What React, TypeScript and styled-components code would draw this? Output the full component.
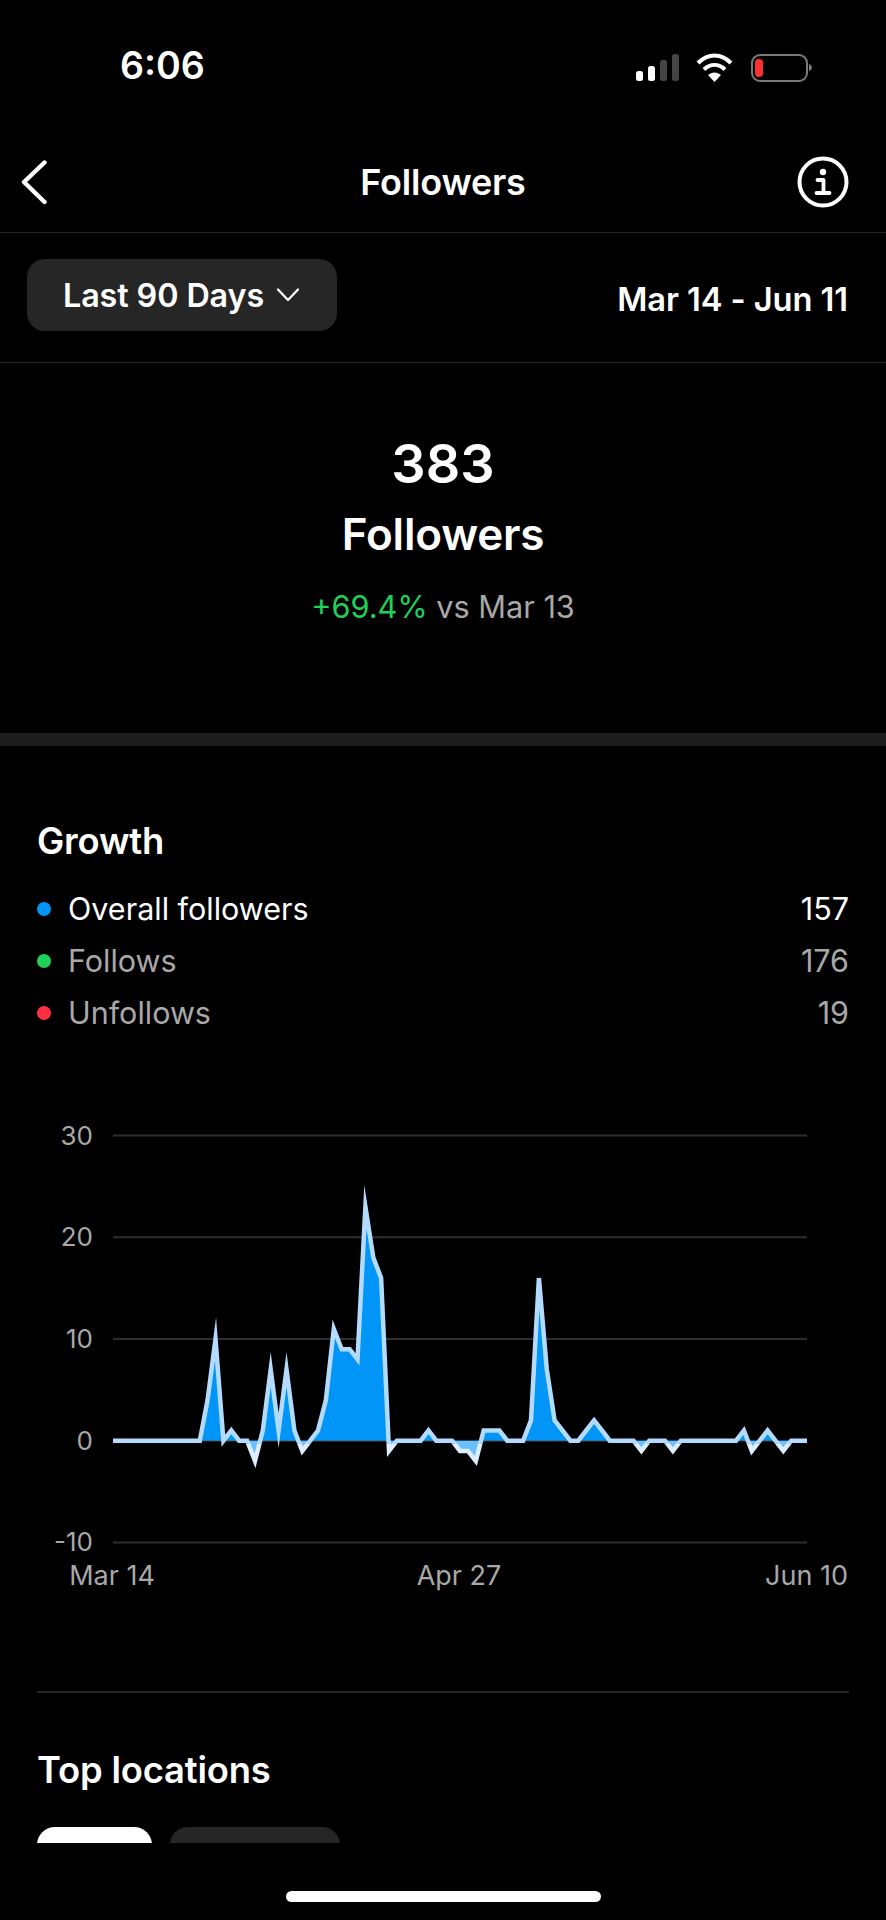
import React from "react";
import styled, { createGlobalStyle } from "styled-components";

const Global = createGlobalStyle`
  html, body { margin: 0; padding: 0; background: #000; }
  body { font-family: Inter, "Liberation Sans", sans-serif; color: #fff; }
`;

const Screen = styled.div`
  width: 886px;
  height: 1920px;
  background: #000;
  display: flex;
  flex-direction: column;
  overflow: hidden;
`;
const Scroller = styled.main`
  height: 1843px;
  overflow: hidden;
  flex: none;
`;
const StatusBar = styled.header`
  height: 132px;
  display: flex;
  justify-content: space-between;
  padding: 42px 72px 0 120px;
  box-sizing: border-box;
`;
const Clock = styled.div`
  font-size: 37.6px;
  line-height: 48px;
  font-weight: 600;
`;
const StatusIcons = styled.svg`
  display: block;
  margin-top: 10px;
`;
const Nav = styled.nav`
  height: 100px;
  display: grid;
  grid-template-columns: 1fr auto 1fr;
  align-items: center;
  padding: 0 36px 0 20px;
  border-bottom: 1px solid #262626;
`;
const NavTitle = styled.h1`
  margin: 0 0 0 16px;
  font-size: 36px;
  font-weight: 600;
  letter-spacing: -0.2px;
`;
const NavIcon = styled.svg<{ $end?: boolean }>`
  display: block;
  justify-self: ${(p) => (p.$end ? "end" : "start")};
`;
const FilterBar = styled.div`
  height: 130px;
  box-sizing: border-box;
  display: flex;
  justify-content: space-between;
  padding: 26px 38px 0 27px;
  border-bottom: 1px solid #262626;
`;
const RangeButton = styled.button`
  width: 310px;
  height: 72px;
  border: 0;
  border-radius: 18px;
  background: #262626;
  color: #fff;
  font: 600 32.3px Inter, "Liberation Sans", sans-serif;
  display: flex;
  align-items: center;
  gap: 12px;
  padding: 0 0 0 36px;
  letter-spacing: -0.1px;
`;
const DateRange = styled.div`
  font-size: 32.7px;
  font-weight: 600;
  line-height: 80px;
  letter-spacing: -0.1px;
`;
const Summary = styled.section`
  height: 370px;
  box-sizing: border-box;
  padding-top: 71px;
  display: flex;
  flex-direction: column;
  align-items: center;
`;
const Count = styled.div`
  font-size: 54px;
  line-height: 60px;
  font-weight: 600;
`;
const SummaryLabel = styled.div`
  font-size: 44px;
  line-height: 50px;
  font-weight: 600;
  margin-top: 15px;
  letter-spacing: -0.2px;
`;
const Delta = styled.div`
  font-size: 30.7px;
  line-height: 40px;
  margin-top: 28px;
  color: #a8a8a8;
`;
const Up = styled.span`
  color: #1fd158;
`;
const Band = styled.div`
  height: 13px;
  background: #1c1c1c;
`;
const Section = styled.section`
  padding: 0 37px 0 37px;
`;
const SectionTitle = styled.h2<{ $top: number }>`
  margin: ${(p) => p.$top}px 0 0;
  font-size: 36.4px;
  line-height: 44px;
  font-weight: 600;
  letter-spacing: -0.2px;
`;
const Legend = styled.ul`
  list-style: none;
  margin: 19.5px 0 0;
  padding: 0;
`;
const LegendRow = styled.li<{ $active?: boolean }>`
  height: 52px;
  display: flex;
  align-items: center;
  font-size: 30.5px;
  color: ${(p) => (p.$active ? "#fff" : "#a8a8a8")};
`;
const Dot = styled.span<{ $color: string }>`
  width: 14px;
  height: 14px;
  border-radius: 50%;
  background: ${(p) => p.$color};
  margin-right: 17px;
  flex: none;
`;
const LegendValue = styled.span`
  margin-left: auto;
`;
const ChartWrap = styled.div`
  margin: 60.5px -37px 0;
`;
const ChartSvg = styled.svg`
  display: block;
`;
const Rule = styled.hr`
  border: 0;
  height: 2px;
  background: #262626;
  margin: 92px 0 0;
`;
const Chips = styled.div`
  display: flex;
  gap: 18px;
  margin-top: 35px;
`;
const Chip = styled.div<{ $w: number; $on?: boolean }>`
  width: ${(p) => p.$w}px;
  height: 72px;
  border-radius: 18px;
  background: ${(p) => (p.$on ? "#fff" : "#262626")};
`;
const Footer = styled.footer`
  flex: 1;
  display: flex;
  justify-content: center;
  padding-top: 48px;
`;
const HomeBar = styled.div`
  width: 315px;
  height: 11px;
  border-radius: 6px;
  background: #fff;
`;

const data = [
  0, 0, 0, 0, 0, 0, 0, 0, 0, 0, 0, 0, 4, 10, 0, 1, 0, 0, -2, 1, 7, 1, 7, 1, -1, 0, 1, 4, 11, 9, 9, 8, 23, 18, 16, -1,
  0, 0, 0, 0, 1, 0, 0, 0, -1, -1, -2, 1, 1, 1, 0, 0, 0, 2, 16, 7, 2, 1, 0, 0, 1, 2, 1, 0, 0, 0, 0, -1, 0, 0, 0, -1, 0,
  0, 0, 0, 0, 0, 0, 0, 1, -1, 0, 1, 0, -1, 0, 0, 0,
];
const X0 = 113;
const STEP = 694 / 88;
const Y0 = 341.7;
const UNIT = 10.17;
const px = (i: number) => X0 + i * STEP;
const py = (v: number) => Y0 - v * UNIT;
const linePts = data.map((v, i) => `${px(i).toFixed(1)},${py(v).toFixed(1)}`).join(" ");
const areaPts = `${X0},${Y0} ${linePts} ${X0 + 694},${Y0}`;

const font = "Inter, 'Liberation Sans', sans-serif";
const yText = { fill: "#a8a8a8", fontSize: 26, fontFamily: font };
const xText = { fill: "#a8a8a8", fontSize: 27, fontFamily: font };

function Chart() {
  return (
    <ChartSvg width={886} height={500} viewBox="0 0 886 500">
      <defs>
        <clipPath id="above">
          <rect x="0" y="0" width="886" height={Y0} />
        </clipPath>
        <clipPath id="below">
          <rect x="0" y={Y0} width="886" height="200" />
        </clipPath>
        <clipPath id="lineAbove">
          <rect x="0" y="0" width="886" height={Y0 + 2.5} />
        </clipPath>
        <clipPath id="lineBelow">
          <rect x="0" y={Y0 + 2.5} width="886" height="200" />
        </clipPath>
      </defs>
      {[30, 20, 10, 0, -10].map((v) => (
        <g key={v}>
          <line x1={X0} x2={X0 + 694} y1={py(v)} y2={py(v)} stroke="#2e2e2e" strokeWidth="2" />
          <text x={93} y={py(v) + 9} textAnchor="end" {...yText}>
            {v}
          </text>
        </g>
      ))}
      <polygon points={areaPts} fill="#0095f6" clipPath="url(#above)" />
      <polygon points={areaPts} fill="#6cbfff" clipPath="url(#below)" />
      <polyline points={linePts} fill="none" stroke="#b3dbff" strokeWidth="4.5" strokeMiterlimit="10" clipPath="url(#lineAbove)" />
      <polyline points={linePts} fill="none" stroke="#dceeff" strokeWidth="4.5" strokeMiterlimit="10" clipPath="url(#lineBelow)" />
      <text x={112} y={486} textAnchor="middle" {...xText}>Mar 14</text>
      <text x={459} y={486} textAnchor="middle" {...xText}>Apr 27</text>
      <text x={848} y={486} textAnchor="end" {...xText}>Jun 10</text>
    </ChartSvg>
  );
}

function StatusGlyphs() {
  return (
    <StatusIcons width={178} height={32} viewBox="636 50 178 32">
      <rect x="636" y="69" width="7" height="10" rx="2.5" fill="#fff" />
      <rect x="648" y="64" width="7" height="15" rx="2.5" fill="#fff" />
      <rect x="660" y="58" width="7" height="21" rx="2.5" fill="#444" />
      <rect x="672" y="52" width="7" height="27" rx="2.5" fill="#444" />
      <g fill="none" stroke="#fff" strokeWidth="4.2">
        <path d="M698 61 C708 51 721 51 731 61" />
        <path d="M704 67.5 C710.5 61.5 718.5 61.5 725 67.5" />
      </g>
      <path d="M708 73 C712 69.5 717 69.5 721 73 L714.5 80 Z" fill="#fff" />
      <rect x="752" y="53" width="55" height="26" rx="8" fill="none" stroke="#7a7a7a" strokeWidth="2" />
      <rect x="755" y="57" width="8" height="18" rx="4" fill="#ff3030" />
      <path d="M809 62 C811.5 63 812 64.5 812 65.5 C812 66.5 811.5 68 809 69 Z" fill="#7a7a7a" />
    </StatusIcons>
  );
}

export default function App() {
  return (
    <>
      <Global />
      <Screen>
        <Scroller>
          <StatusBar>
            <Clock>6:06</Clock>
            <StatusGlyphs />
          </StatusBar>
          <Nav>
            <NavIcon width={28} height={46} viewBox="0 0 28 46">
              <path d="M24.5 3.5 L4 23 L24.5 43" fill="none" stroke="#fff" strokeWidth="4.4" strokeLinecap="round" strokeLinejoin="round" />
            </NavIcon>
            <NavTitle>Followers</NavTitle>
            <NavIcon $end width={54} height={54} viewBox="0 0 54 54">
              <circle cx="27" cy="27" r="23.5" fill="none" stroke="#fff" strokeWidth="4" />
              <circle cx="27" cy="17" r="3.2" fill="#fff" />
              <path d="M21.5 25 H27.5 V37 M20.5 38 H33.5" fill="none" stroke="#fff" strokeWidth="3.8" strokeLinecap="round" strokeLinejoin="round" />
            </NavIcon>
          </Nav>
          <FilterBar>
            <RangeButton>
              Last 90 Days
              <svg width={24} height={14} viewBox="0 0 24 14">
                <path d="M2 1.5 L12 12 L22 1.5" fill="none" stroke="#fff" strokeWidth="2.2" strokeLinecap="round" strokeLinejoin="round" />
              </svg>
            </RangeButton>
            <DateRange>Mar 14 - Jun 11</DateRange>
          </FilterBar>
          <Summary>
            <Count>383</Count>
            <SummaryLabel>Followers</SummaryLabel>
            <Delta>
              <Up>+69.4%</Up> vs Mar 13
            </Delta>
          </Summary>
          <Band />
          <Section>
            <SectionTitle $top={73}>Growth</SectionTitle>
            <Legend>
              <LegendRow $active>
                <Dot $color="#0095f6" />
                Overall followers
                <LegendValue>157</LegendValue>
              </LegendRow>
              <LegendRow>
                <Dot $color="#1fd158" />
                Follows
                <LegendValue>176</LegendValue>
              </LegendRow>
              <LegendRow>
                <Dot $color="#ff3040" />
                Unfollows
                <LegendValue>19</LegendValue>
              </LegendRow>
            </Legend>
            <ChartWrap>
              <Chart />
            </ChartWrap>
            <Rule />
            <SectionTitle $top={55}>Top locations</SectionTitle>
            <Chips>
              <Chip $w={115} $on />
              <Chip $w={170} />
            </Chips>
          </Section>
        </Scroller>
        <Footer>
          <HomeBar />
        </Footer>
      </Screen>
    </>
  );
}
